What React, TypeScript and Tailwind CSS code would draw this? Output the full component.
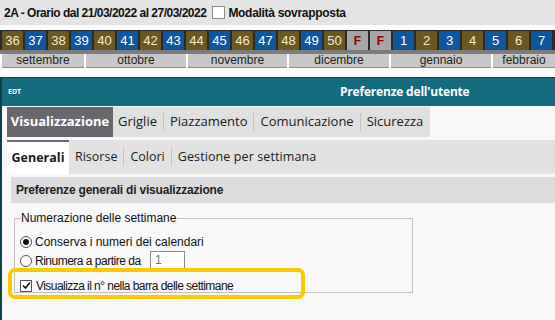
import React from 'react';

type Week = { label: string; kind: 'olive' | 'blue' | 'holiday' };

const weeks: Week[] = [
  ...Array.from({ length: 15 }, (_, i) => ({ label: String(36 + i), kind: (i % 2 === 0 ? 'olive' : 'blue') as Week['kind'] })),
  { label: 'F', kind: 'holiday' },
  { label: 'F', kind: 'holiday' },
  ...Array.from({ length: 7 }, (_, i) => ({ label: String(1 + i), kind: (i % 2 === 0 ? 'blue' : 'olive') as Week['kind'] })),
];

const months = [
  { name: 'settembre', w: 'w-[82px]' },
  { name: 'ottobre', w: 'w-[100px]' },
  { name: 'novembre', w: 'w-[99px]' },
  { name: 'dicembre', w: 'w-[100px]' },
  { name: 'gennaio', w: 'w-[100px]' },
  { name: 'febbraio', w: 'flex-1' },
];

const WeekCell: React.FC<{ w: Week }> = ({ w }) => {
  if (w.kind === 'holiday') {
    return (
      <div className="w-[21px] h-[19px] shrink-0 bg-[#a6a6a6] flex items-center justify-center text-[12px] font-bold text-[#8b0000]">
        {w.label}
      </div>
    );
  }
  return (
    <div
      className={`w-[21px] h-[19px] shrink-0 flex items-center justify-center text-[13px] ${
        w.kind === 'olive' ? 'bg-[#6a5820] text-[#f3ead0]' : 'bg-[#0d56a0] text-white'
      }`}
    >
      {w.label}
    </div>
  );
};

const TabSep = () => <div className="w-px h-[18px] bg-[#c4c4c4] mx-[6px]" />;

export default function App() {
  return (
    <div className="w-[555px] h-[320px] overflow-hidden bg-white relative font-['Liberation_Sans',Arial,sans-serif]">
      {/* header */}
      <div className="h-[25px] bg-[#e4e4e4] flex items-center pl-[4px] text-[12px] font-bold text-[#111]">
        <span className="tracking-[-0.5px]">2A - Orario dal 21/03/2022 al 27/03/2022</span>
        <span className="ml-[6px] w-[13px] h-[13px] bg-white border border-[#8a8a8a]" />
        <span className="ml-[3px] tracking-[-0.3px]">Modalità sovrapposta</span>
      </div>
      {/* week bar */}
      <div className="mt-[5px] bg-[#2a2a2a] pt-px pl-[2px] flex gap-[2px]">
        {weeks.map((w, i) => (
          <WeekCell key={i} w={w} />
        ))}
      </div>
      <div className="h-[4px] bg-[#7c7c7c]" />
      <div className="h-[14px] flex bg-white pl-[2px] gap-[2px] text-[12px] text-[#222] leading-[13px]">
        {months.map((m) => (
          <div key={m.name} className={`${m.w} h-[14px] bg-[#c8c8c8] border-b border-[#8a8a8a] text-center`}>
            {m.name}
          </div>
        ))}
      </div>
      {/* window */}
      <div className="mt-[9px] border-l-2 border-t border-[#0d3f4d] bg-[#f8f8f8] h-[243px]">
        <div className="h-[28px] bg-[#146b7e] flex items-center text-white font-['Open_Sans',sans-serif]">
          <span className="pl-[6px] text-[7px] font-bold w-[80px]">EDT</span>
          <span className="ml-[258px] text-[12px] font-bold tracking-[-0.2px]">Preferenze dell'utente</span>
        </div>
        {/* tabs row 1 */}
        <div className="pt-px pl-[5px] font-['Open_Sans',sans-serif] text-[13px] text-[#1a1a1a]">
          <div className="flex items-center h-[30px] w-[423px] bg-[#e0e0e0]">
            <div className="h-full w-[106px] flex items-center justify-center bg-[#67676d] text-white font-bold">Visualizzazione</div>
            <span className="ml-[5px]">Griglie</span>
            <TabSep />
            <span>Piazzamento</span>
            <TabSep />
            <span>Comunicazione</span>
            <TabSep />
            <span>Sicurezza</span>
          </div>
        </div>
        {/* tabs row 2 */}
        <div className="mt-[3px] pl-[5px] font-['Open_Sans',sans-serif] text-[12.5px] text-[#1a1a1a]">
          <div className="flex items-center h-[34px] bg-[#e2e2e2]">
            <div className="h-full w-[62px] flex items-center justify-center bg-white border-t-2 border-[#6b6b6b] font-bold">Generali</div>
            <span className="ml-[6px]">Risorse</span>
            <TabSep />
            <span>Colori</span>
            <TabSep />
            <span className="tracking-[0.1px]">Gestione per settimana</span>
          </div>
        </div>
        {/* content */}
        <div className="mt-[3px] pl-[9px]">
          <div className="h-[26px] bg-[#dcdcde] flex items-center pl-[5px] text-[12px] font-bold text-[#222] tracking-[-0.2px]">
            Preferenze generali di visualizzazione
          </div>
          <div className="pl-[3px] pt-[9px]">
            <fieldset className="w-[399px] h-[81px] border border-[#c2c2c2] px-[6px] text-[12px] text-[#111]">
              <legend className="px-0 leading-[12px]">Numerazione delle settimane</legend>
              <div className="flex items-center h-[19px] mt-[8px] -ml-[1px]">
                <span className="w-[12px] h-[12px] rounded-full border border-[#555] bg-white flex items-center justify-center">
                  <span className="w-[6px] h-[6px] rounded-full bg-[#111]" />
                </span>
                <span className="ml-[3px]">Conserva i numeri dei calendari</span>
              </div>
              <div className="flex items-center h-[19px] -ml-[1px]">
                <span className="w-[12px] h-[12px] rounded-full border border-[#555] bg-white" />
                <span className="ml-[3px] w-[115px] tracking-[-0.5px]">Rinumera a partire da</span>
                <span className="w-[35px] h-[19px] border border-[#8c8c8c] bg-white text-[#777] pl-[4px] leading-[17px]">1</span>
              </div>
              <div className="flex items-center h-[19px] mt-[6px] -ml-[1px]">
                <span className="w-[12px] h-[12px] border border-[#555] bg-white flex items-center justify-center">
                  <svg width="9" height="9" viewBox="0 0 9 9">
                    <path d="M1 4.5 L3.5 7 L8 1.5" fill="none" stroke="#111" strokeWidth="1.6" />
                  </svg>
                </span>
                <span className="ml-[4px] tracking-[-0.55px]">Visualizza il n° nella barra delle settimane</span>
              </div>
            </fieldset>
          </div>
        </div>
      </div>
      {/* highlight */}
      <div className="absolute left-[8px] top-[268px] w-[297px] h-[31px] border-[4px] border-[#fcc800] rounded-[7px]" />
    </div>
  );
}
